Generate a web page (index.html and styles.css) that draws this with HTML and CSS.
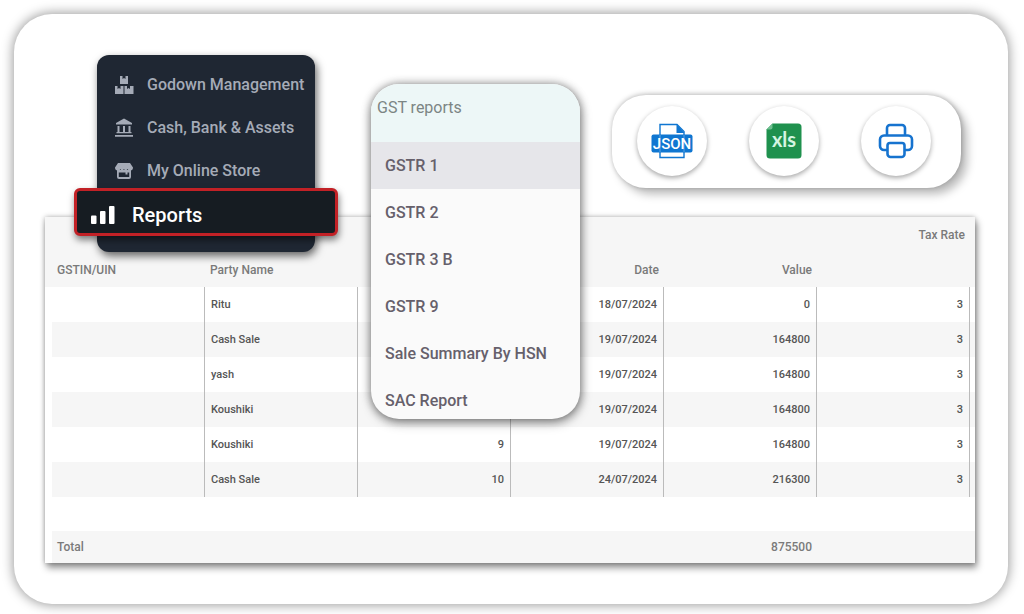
FILE: index.html
```html
<!DOCTYPE html>
<html lang="en">
<head>
<meta charset="utf-8">
<meta name="viewport" content="width=device-width, initial-scale=1">
<title>GST reports</title>
<link rel="stylesheet" href="styles.css">
</head>
<body>
<main class="card">
  <div class="actions">
    <button class="action" type="button" aria-label="Export JSON">
      <svg width="42" height="36" viewBox="0 0 42 36">
        <path d="M9 12V1.500H26L33 8.500V12M9 28V34.500H33V28" fill="#fff" stroke="#0f76d1" stroke-width="1.400"/>
        <path d="M25.500 1V10H33.500Z" fill="#0f76d1"/>
        <rect x="0.500" y="11.500" width="41" height="18" rx="2" fill="#0f76d1"/>
        <path d="M9 12V29M33 12V29" stroke="#5ba4e4" stroke-width="1"/>
        <text class="json-label" x="21" y="26" text-anchor="middle">JSON</text>
      </svg>
    </button>
    <button class="action" type="button" aria-label="Export XLS">
      <svg width="36" height="36" viewBox="0 0 36 36">
        <path d="M6.500 0.500H32A3.500 3.500 0 0 1 35.500 4V32A3.500 3.500 0 0 1 32 35.500H4A3.500 3.500 0 0 1 0.500 32V6.500Z" fill="#1f914e"/>
        <path d="M6.500 0.500V4.500A2 2 0 0 1 4.500 6.500H0.500Z" fill="#6fbf90"/>
        <text class="xls-label" x="18" y="24" text-anchor="middle">xls</text>
      </svg>
    </button>
    <button class="action" type="button" aria-label="Print">
      <svg width="36" height="36" viewBox="0 0 36 36" fill="none" stroke="#1673cf" stroke-width="2.600" stroke-linejoin="round">
        <path d="M9 12.500V5A3 3 0 0 1 12 2H24A3 3 0 0 1 27 5V12.500"/>
        <path d="M9.500 27H6A4 4 0 0 1 2 23V16.500A4 4 0 0 1 6 12.500H30A4 4 0 0 1 34 16.500V23A4 4 0 0 1 30 27H26.500"/>
        <path d="M12 20H24A2.500 2.500 0 0 1 26.500 22.500V31A3 3 0 0 1 23.500 34H12.500A3 3 0 0 1 9.500 31V22.500A2.500 2.500 0 0 1 12 20Z"/>
      </svg>
    </button>
  </div>

  <section class="sheet">
    <table class="report">
      <thead>
        <tr><th></th><th></th><th></th><th></th><th></th><th class="num">Tax Rate</th></tr>
        <tr><th>GSTIN/UIN</th><th>Party Name</th><th></th><th class="num">Date</th><th class="num">Value</th><th></th></tr>
      </thead>
      <tbody>
        <tr><td></td><td>Ritu</td><td></td><td class="num">18/07/2024</td><td class="num">0</td><td class="num">3</td></tr>
        <tr><td></td><td>Cash Sale</td><td></td><td class="num">19/07/2024</td><td class="num">164800</td><td class="num">3</td></tr>
        <tr><td></td><td>yash</td><td></td><td class="num">19/07/2024</td><td class="num">164800</td><td class="num">3</td></tr>
        <tr><td></td><td>Koushiki</td><td></td><td class="num">19/07/2024</td><td class="num">164800</td><td class="num">3</td></tr>
        <tr><td></td><td>Koushiki</td><td class="num">9</td><td class="num">19/07/2024</td><td class="num">164800</td><td class="num">3</td></tr>
        <tr><td></td><td>Cash Sale</td><td class="num">10</td><td class="num">24/07/2024</td><td class="num">216300</td><td class="num">3</td></tr>
      </tbody>
      <tfoot>
        <tr class="spacer"><td colspan="6"></td></tr>
        <tr class="total"><th>Total</th><th></th><th></th><th></th><th class="num">875500</th><th></th></tr>
      </tfoot>
    </table>
  </section>

  <nav class="side">
    <a class="side-item" href="#">
      <svg class="side-icon" viewBox="0 0 20 20" fill="currentColor"><path d="M6 1H8.500V4L10 3L11.500 4V1H14V9H6ZM1 11H3.500V14L5 13L6.500 14V11H9.500V19H1ZM10.500 11H13V14L14.500 13L16 14V11H19.500V19H10.500Z"/></svg>
      Godown Management
    </a>
    <a class="side-item" href="#">
      <svg class="side-icon" viewBox="0 0 20 20" fill="currentColor"><path d="M10 0.500L18 5V6.500H2V5ZM3.500 8H5.500V14H3.500ZM9 8H11V14H9ZM14.500 8H16.500V14H14.500ZM2.500 14H17.500V15.300H2.500ZM1 17H19V18.800H1Z"/></svg>
      Cash, Bank &amp; Assets
    </a>
    <a class="side-item" href="#">
      <svg class="side-icon" viewBox="0 0 20 20" fill="currentColor"><path d="M4 2H16L19 6.500C19 8.500 18 9.500 16.500 9.500C15 9.500 14.200 9 13.500 8C12.500 9.800 10.700 9.800 10 8C9 9.800 7 9.800 6.500 8C5.800 9 5 9.500 3.500 9.500C2 9.500 1 8.500 1 6.500Z"/><path fill-rule="evenodd" d="M3 9H17V16Q17 18 15 18H5Q3 18 3 16ZM4.800 11.500V16H15.200V11.500H13.500V13.500H11.500V11.500Z"/></svg>
      My Online Store
    </a>
    <a class="side-item current" href="#" aria-current="page">
      <svg class="bars-icon" viewBox="0 0 26 20" fill="currentColor"><rect x="1" y="10.500" width="5.500" height="8.500" rx="1"/><rect x="10" y="6" width="5.500" height="13" rx="1"/><rect x="19" y="1" width="5.500" height="18" rx="1"/></svg>
      Reports
    </a>
  </nav>

  <div class="menu">
    <h2 class="menu-title">GST reports</h2>
    <ul class="menu-list">
      <li><a class="menu-item selected" href="#">GSTR 1</a></li>
      <li><a class="menu-item" href="#">GSTR 2</a></li>
      <li><a class="menu-item" href="#">GSTR 3 B</a></li>
      <li><a class="menu-item" href="#">GSTR 9</a></li>
      <li><a class="menu-item" href="#">Sale Summary By HSN</a></li>
      <li><a class="menu-item" href="#">SAC Report</a></li>
    </ul>
  </div>
</main>
</body>
</html>
```
FILE: styles.css
```css
* { box-sizing: border-box; }

body {
  margin: 0;
  padding: 14px 16px 10px 14px;
  background: #fff;
  font-family: Roboto, "Liberation Sans", sans-serif;
}

a { color: inherit; text-decoration: none; }

.card {
  position: relative;
  padding: 81px 33px 41px 31px;
  border-radius: 38px;
  background: #fff;
  box-shadow: 0 0 12px 1px rgba(0, 0, 0, 0.4);
}

.actions {
  display: flex;
  align-items: center;
  justify-content: space-between;
  width: 349px;
  height: 93px;
  margin: 0 14px 29px auto;
  padding: 0 30px 2px 25px;
  border-radius: 34px;
  background: #fff;
  box-shadow: 0 -1px 5px rgba(0, 0, 0, 0.25), 6px 6px 10px rgba(0, 0, 0, 0.28);
}

.action {
  display: flex;
  align-items: center;
  justify-content: center;
  width: 70px;
  height: 70px;
  padding: 0;
  border: 0;
  border-radius: 50%;
  background: #fff;
  box-shadow: 0 2px 5px rgba(0, 0, 0, 0.35);
}

.json-label { font: 500 15px Roboto, sans-serif; fill: #fff; }
.xls-label { font: 700 20px Lato, sans-serif; fill: #d5f5e1; }

.sheet {
  padding: 0 5px 0 7px;
  background: #fff;
  box-shadow: 0 0 5px rgba(0, 0, 0, 0.3), 2px 5px 7px rgba(0, 0, 0, 0.4);
}

.report {
  width: 100%;
  table-layout: fixed;
  border-collapse: separate;
  border-spacing: 0;
  font-size: 11px;
  font-weight: 500;
  line-height: 16px;
  color: #555;
}

.report th, .report td { height: 35px; padding: 0 6px; text-align: left; }
.report th { padding: 0 5px; font-size: 12px; font-weight: 500; color: #7a7a7a; }
.report .num { text-align: right; }
.report thead tr { background: #f6f6f6; box-shadow: 5px 0 #f6f6f6, -7px 0 #f6f6f6; }
.report tbody td { border-right: 1px solid #bbb; }
.report tbody tr:nth-child(even), .report .total { background: #f6f6f6; box-shadow: 5px 0 #f6f6f6; }
.report .spacer td { height: 34px; }
.report .total th { height: 32px; }

.side {
  position: absolute;
  top: 41px;
  left: 83px;
  width: 218px;
  padding: 8px 0 16px;
  border-radius: 12px;
  background: #1f2733;
  box-shadow: 2px 4px 8px rgba(0, 0, 0, 0.6);
}

.side-item {
  display: flex;
  align-items: center;
  gap: 13px;
  height: 43px;
  padding-left: 17px;
  font-size: 16px;
  font-weight: 500;
  line-height: 24px;
  white-space: nowrap;
  color: #a5abb7;
}

.side-icon { width: 20px; height: 20px; }

.side-item.current {
  gap: 16px;
  height: 48px;
  margin: -4px -23px 0;
  padding: 6px 0 0 13px;
  border: 3px solid #c22126;
  border-radius: 6px;
  background: #161c22;
  box-shadow: 1px 4px 7px rgba(0, 0, 0, 0.5);
  font-size: 20px;
  color: #fff;
}

.bars-icon { width: 26px; height: 20px; }

.menu {
  position: absolute;
  top: 70px;
  left: 357px;
  width: 209px;
  overflow: hidden;
  border-radius: 28px;
  background: #fafafa;
  box-shadow: 0 0 10px rgba(0, 0, 0, 0.4), 1px 4px 11px rgba(0, 0, 0, 0.35);
}

.menu-title {
  height: 58px;
  margin: 0;
  padding: 12px 6px;
  background: #edf7f7;
  font-size: 16px;
  font-weight: 400;
  line-height: 24px;
  color: #7c8584;
}

.menu-list { margin: 0 0 -5px; padding: 0; list-style: none; }

.menu-item {
  display: block;
  padding: 12px 14px 11px;
  font-size: 16px;
  font-weight: 500;
  line-height: 24px;
  white-space: nowrap;
  color: #66606b;
}

.menu-item.selected { background: #e6e6ea; }
```
